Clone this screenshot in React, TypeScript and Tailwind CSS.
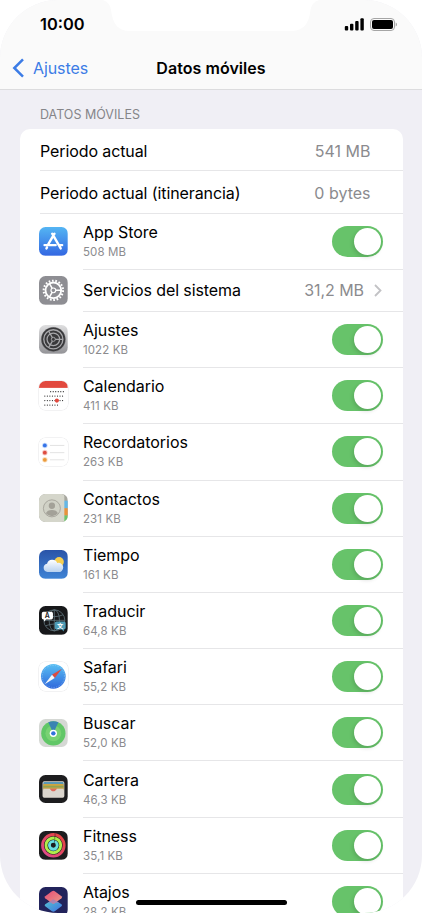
import React from "react";

const AppStoreIcon: React.FC = () => (
  <svg viewBox="0 0 30 30" className="w-full h-full">
    <defs>
      <linearGradient id="store" x1="0" y1="0" x2="0" y2="1">
        <stop offset="0" stopColor="#54b5f3" />
        <stop offset="1" stopColor="#3367e2" />
      </linearGradient>
    </defs>
    <rect width="30" height="30" fill="url(#store)" />
    <g stroke="#fff" strokeWidth="2.5" strokeLinecap="round" fill="none">
      <path d="M16.2 7 9.6 18.2M13.8 7l8.9 15.4M5.8 18.9h11.6M21.2 18.9h3M8.4 21.4l-.6 1" />
    </g>
  </svg>
);

const GearIcon: React.FC = () => (
  <svg viewBox="0 0 30 30" className="w-full h-full">
    <rect width="30" height="30" fill="#8e8e93" />
    <g fill="none" stroke="#fff">
      <circle cx="15" cy="15" r="10.1" strokeWidth="2.2" strokeDasharray="1.75 1.776" />
      <circle cx="15" cy="15" r="8.2" strokeWidth="1.9" />
      <circle cx="15" cy="15" r="2.5" strokeWidth="1.2" />
      <path d="M17.6 15h5.6M13.7 12.8l-2.8-4.9M13.7 17.2l-2.8 4.9" strokeWidth="1.6" />
    </g>
  </svg>
);

const SettingsIcon: React.FC = () => (
  <svg viewBox="0 0 30 30" className="w-full h-full">
    <defs>
      <linearGradient id="settings" x1="0" y1="0" x2="0" y2="1">
        <stop offset="0" stopColor="#dededf" />
        <stop offset="1" stopColor="#949498" />
      </linearGradient>
    </defs>
    <rect width="30" height="30" fill="url(#settings)" />
    <circle cx="15" cy="15" r="12.6" fill="#39393b" />
    <g fill="none" stroke="#a7a7aa">
      <circle cx="15" cy="15" r="10" strokeWidth="1.4" />
      <circle cx="15" cy="15" r="12.5" strokeWidth=".7" stroke="#707073" strokeDasharray=".8 .8" />
      <circle cx="15" cy="15" r="6.6" strokeWidth="1.3" />
      <circle cx="15" cy="15" r="2.1" strokeWidth="1" />
      <path d="M17 15h8M14 13.2 10 6.3M14 16.8l-4 6.9" strokeWidth="1.3" />
    </g>
  </svg>
);

const CalendarIcon: React.FC = () => (
  <svg viewBox="0 0 30 30" className="w-full h-full">
    <rect width="30" height="30" fill="#fff" />
    <rect width="30" height="7.2" fill="#e2493e" />
    <g stroke="#222" strokeWidth="1.25" strokeLinecap="round" strokeDasharray="0 2.65">
      <path d="M12.2 11.2h13.4M6.1 15.8h19.5M6.1 20.5h19.5M6.1 25.2h13.4" />
    </g>
    <circle cx="18.7" cy="20.5" r="2.2" fill="#e2493e" />
  </svg>
);

const RemindersIcon: React.FC = () => (
  <svg viewBox="0 0 30 30" className="w-full h-full">
    <rect width="30" height="30" fill="#fff" />
    <path d="M11.5 7.8h15M11.5 15.3h15M11.5 22.8h15" stroke="#dedede" strokeWidth=".9" />
    <circle cx="6.1" cy="7.8" r="2.9" fill="#c9dcfa" />
    <circle cx="6.1" cy="15.3" r="2.9" fill="#f8cdca" />
    <circle cx="6.1" cy="22.8" r="2.9" fill="#fae0bf" />
    <circle cx="6.1" cy="7.8" r="2" fill="#3674e8" />
    <circle cx="6.1" cy="15.3" r="2" fill="#dd4c40" />
    <circle cx="6.1" cy="22.8" r="2" fill="#eb9a3b" />
  </svg>
);

const ContactsIcon: React.FC = () => (
  <svg viewBox="0 0 30 30" className="w-full h-full">
    <rect width="30" height="30" fill="#a7a79f" />
    <path d="M26 7h4v8h-4z" fill="#63b7e6" />
    <path d="M26 15h4v7.5h-4z" fill="#e8923a" />
    <path d="M26 22.5h4V30h-4z" fill="#6cc56a" />
    <path d="M0 0h24.2q2.3 0 2.3 2.5v25q0 2.5-2.3 2.5H0z" fill="#d5d6cb" />
    <circle cx="13.5" cy="15" r="8.9" fill="#d0d1c6" stroke="#a3a198" strokeWidth=".9" />
    <circle cx="13.5" cy="12.3" r="3.3" fill="#a3a198" />
    <path d="M7.2 20.2q1.3-3.5 6.3-3.5t6.3 3.5a8.2 8.2 0 0 1-12.6 0z" fill="#a3a198" />
  </svg>
);

const WeatherIcon: React.FC = () => (
  <svg viewBox="0 0 30 30" className="w-full h-full">
    <defs>
      <linearGradient id="sky" x1="0" y1="0" x2="0" y2="1">
        <stop offset="0" stopColor="#2a54a8" />
        <stop offset="1" stopColor="#3e83d5" />
      </linearGradient>
      <linearGradient id="cloud" x1="0" y1="0" x2="0" y2="1">
        <stop offset="0" stopColor="#fff" />
        <stop offset="1" stopColor="#b7d1ef" />
      </linearGradient>
    </defs>
    <rect width="30" height="30" fill="url(#sky)" />
    <circle cx="21" cy="12.3" r="5" fill="#f5cf52" />
    <path d="M8.9 23a4.4 4.4 0 0 1-.5-8.7 5.7 5.7 0 0 1 10.7-.6 4.8 4.8 0 1 1 .6 9.3z" fill="url(#cloud)" />
  </svg>
);

const TranslateIcon: React.FC = () => (
  <svg viewBox="0 0 30 30" className="w-full h-full">
    <rect width="30" height="30" fill="#17181a" />
    <g fill="none" stroke="#63777f" strokeWidth=".8">
      <circle cx="16" cy="15" r="11" />
      <ellipse cx="16" cy="15" rx="5.4" ry="11" />
      <path d="M16 4v22M5 15h22M7 9.3q9 3.7 18 0M7 20.7q9-3.7 18 0" />
    </g>
    <path d="M4.7 6h8.1q1.8 0 1.8 1.8v4.6q0 1.8-1.8 1.8H7.4l-2.2 2.3v-2.3h-.5q-1.8 0-1.8-1.8V7.8Q2.9 6 4.7 6z" fill="#fff" />
    <text x="8.7" y="12.8" textAnchor="middle" fontSize="7.2" fontWeight="600" fontFamily="Inter, sans-serif" fill="#222">
      A
    </text>
    <path d="M18.3 16.2h7.8q1.8 0 1.8 1.8v4.8q0 1.8-1.8 1.8H26v2l-2.2-2h-5.5q-1.8 0-1.8-1.8V18q0-1.8 1.8-1.8z" fill="#4d9bb5" />
    <text x="22.2" y="22.9" textAnchor="middle" fontSize="6.5" fontWeight="700" fontFamily="'Noto Sans CJK SC', sans-serif" fill="#fff">
      文
    </text>
  </svg>
);

const SafariIcon: React.FC = () => (
  <svg viewBox="0 0 30 30" className="w-full h-full">
    <defs>
      <linearGradient id="safari" x1="0" y1="0" x2="0" y2="1">
        <stop offset="0" stopColor="#59bff3" />
        <stop offset="1" stopColor="#2f68dc" />
      </linearGradient>
    </defs>
    <rect width="30" height="30" fill="#fff" />
    <circle cx="15" cy="15" r="12.9" fill="url(#safari)" />
    <circle cx="15" cy="15" r="11.6" fill="none" stroke="#b9dcf8" strokeWidth="1" strokeDasharray=".4 1.42" />
    <path d="m24 7-10.4 6.4 2.8 3.3z" fill="#dc4a40" />
    <path d="m6 23.2 7.6-9.8 2.8 3.3z" fill="#f6f7f9" />
  </svg>
);

const FindMyIcon: React.FC = () => (
  <svg viewBox="0 0 30 30" className="w-full h-full">
    <rect width="30" height="30" fill="#d5d8d4" />
    <circle cx="15" cy="15" r="12.7" fill="#61c767" />
    <circle cx="15" cy="15" r="8.3" fill="#78d273" />
    <path d="M15 15 9.7 3.5a12.7 12.7 0 0 1 10.6 0z" fill="#3a84b2" />
    <circle cx="15" cy="15" r="3.8" fill="#fff" />
    <circle cx="15" cy="15" r="2.3" fill="#3272dc" />
  </svg>
);

const WalletIcon: React.FC = () => (
  <svg viewBox="0 0 30 30" className="w-full h-full">
    <rect width="30" height="30" fill="#1d1d1f" />
    <rect x="3.7" y="6.5" width="22.8" height="17.2" rx="1.8" fill="#ddd8cf" />
    <rect x="4.5" y="7.3" width="21.2" height="6" rx="1" fill="#5a98b5" />
    <path d="M4.5 9.3h21.2v5H4.5z" fill="#cfa53f" />
    <path d="M4.5 11.3h21.2v4H4.5z" fill="#8ea451" />
    <path d="M4.5 13h21.2v3H4.5z" fill="#c9a04a" />
    <path d="M4.5 14.3h6.7q1 0 1.5.8 2.3 3 4.8 0 .5-.8 1.5-.8h6.7v7.3q0 1.3-1.3 1.3H5.8q-1.3 0-1.3-1.3z" fill="#dbd6ce" />
    <path d="M10.8 14.3h8.4c-1.2 0-1.5 2.8-4.2 2.8s-3-2.8-4.2-2.8z" fill="#df6c5c" />
  </svg>
);

const FitnessIcon: React.FC = () => (
  <svg viewBox="0 0 30 30" className="w-full h-full">
    <defs>
      <linearGradient id="move" x1="1" y1="0" x2="0" y2="1">
        <stop offset="0" stopColor="#e64439" />
        <stop offset="1" stopColor="#df4c91" />
      </linearGradient>
    </defs>
    <rect width="30" height="30" fill="#1d1d1f" />
    <g fill="none" strokeWidth="3">
      <circle cx="15" cy="15" r="11.3" stroke="url(#move)" />
      <circle cx="15" cy="15" r="7.7" stroke="#aeee4b" />
      <circle cx="15" cy="15" r="4.1" stroke="#68dfe1" />
    </g>
    <path d="M16.8 2.3v3.3M16.5 5.7v3.2M16.2 9.2v3.2" stroke="#1d1d1f" strokeWidth=".9" opacity=".55" />
  </svg>
);

const ShortcutsIcon: React.FC = () => (
  <svg viewBox="0 0 30 30" className="w-full h-full">
    <defs>
      <linearGradient id="short1" x1="0" y1="0" x2="1" y2="1">
        <stop offset="0" stopColor="#e64c77" />
        <stop offset="1" stopColor="#e89b87" />
      </linearGradient>
      <linearGradient id="short2" x1="0" y1="0" x2="1" y2="1">
        <stop offset="0" stopColor="#55c6cf" />
        <stop offset="1" stopColor="#3f72e4" />
      </linearGradient>
    </defs>
    <rect width="30" height="30" fill="#22235b" />
    <path d="M13.5 13.5q1.5-1 3 0l7 4.6q1.3 1 0 2l-7 5.2q-1.5 1-3 0l-7-5.2q-1.3-1 0-2z" fill="url(#short2)" />
    <path d="M13.5 4.5q1.5-1 3 0l7 5.2q1.3 1 0 2l-7 5.2q-1.5 1-3 0l-7-5.2q-1.3-1 0-2z" fill="url(#short1)" />
    <path d="m15 12.8 6.3 4h-4.8q-1.5 1.3-3 0l-4.6-.2z" fill="#9c82bd" opacity=".75" />
  </svg>
);

type App = {
  name: string;
  usage: string;
  icon: React.FC;
  outlined?: boolean;
  link?: boolean;
};

const apps: App[] = [
  { name: "App Store", usage: "508 MB", icon: AppStoreIcon },
  { name: "Servicios del sistema", usage: "31,2 MB", icon: GearIcon, link: true },
  { name: "Ajustes", usage: "1022 KB", icon: SettingsIcon },
  { name: "Calendario", usage: "411 KB", icon: CalendarIcon, outlined: true },
  { name: "Recordatorios", usage: "263 KB", icon: RemindersIcon, outlined: true },
  { name: "Contactos", usage: "231 KB", icon: ContactsIcon },
  { name: "Tiempo", usage: "161 KB", icon: WeatherIcon },
  { name: "Traducir", usage: "64,8 KB", icon: TranslateIcon },
  { name: "Safari", usage: "55,2 KB", icon: SafariIcon, outlined: true },
  { name: "Buscar", usage: "52,0 KB", icon: FindMyIcon },
  { name: "Cartera", usage: "46,3 KB", icon: WalletIcon },
  { name: "Fitness", usage: "35,1 KB", icon: FitnessIcon },
  { name: "Atajos", usage: "28,2 KB", icon: ShortcutsIcon },
];

const Toggle: React.FC = () => (
  <button
    type="button"
    role="switch"
    aria-checked="true"
    className="w-[51px] h-[31px] p-[2px] flex justify-end rounded-full bg-[#67c36a]"
  >
    <span className="w-[27px] h-[27px] rounded-full bg-white shadow-[-1px_2px_4px_rgba(0,0,0,0.15)]" />
  </button>
);

const TotalRow: React.FC<{ label: string; value: string }> = ({ label, value }) => (
  <div className="ml-5 h-[42.2px] pt-[1.5px] pr-8 flex items-center justify-between border-b border-[#e6e6e8]">
    <span className="text-[16px] tracking-[-0.1px] text-black">{label}</span>
    <span className="text-[16px] text-[#8b8b8e]">{value}</span>
  </div>
);

const AppRow: React.FC<{ app: App }> = ({ app }) => {
  const Icon = app.icon;
  return (
    <div className={app.link ? "flex items-center h-[42.1px] pl-[19.3px]" : "flex items-center h-[56.2px] pl-[19.3px]"}>
      <div
        className={
          app.outlined
            ? "w-[28.7px] h-[28.7px] mb-px rounded-[6.5px] overflow-hidden ring-[0.5px] ring-[#e6e6e8]"
            : "w-[28.7px] h-[28.7px] mb-px rounded-[6.5px] overflow-hidden"
        }
      >
        <Icon />
      </div>
      <div className="ml-[15px] h-full flex-1 pr-5 flex items-center justify-between border-b border-[#e6e6e8]">
        {app.link ? (
          <>
            <span className="text-[16px] tracking-[-0.1px] text-black">{app.name}</span>
            <span className="flex items-center text-[16px] tracking-[-0.05px] text-[#8b8b8e]">
              {app.usage}
              <svg viewBox="0 0 8 13" className="w-2 h-[13px] ml-[10px] mr-[0.5px]" fill="none" stroke="#c2c2c5" strokeWidth="1.8">
                <path d="m1 1 5.5 5.5L1 12" />
              </svg>
            </span>
          </>
        ) : (
          <>
            <div className="pt-px flex flex-col">
              <span className="text-[16px] leading-[20px] tracking-[-0.05px] text-black">{app.name}</span>
              <span className="mt-px text-[11.5px] leading-[19px] tracking-[0.1px] text-[#8b8b8e]">{app.usage}</span>
            </div>
            <Toggle />
          </>
        )}
      </div>
    </div>
  );
};

const App: React.FC = () => {
  return (
    <div className="relative w-[422px] h-[913px] overflow-hidden rounded-[58px] bg-[#f0eff5] font-['Inter',sans-serif]">
      <header className="h-[90px] flex flex-col bg-[#fafafa] border-b border-[#dcdcde]">
        <div className="h-12 pl-10 pr-[25px] flex items-center justify-between">
          <span className="text-[16.4px] font-semibold text-black">10:00</span>
          <div className="flex items-center gap-[6px]">
            <svg viewBox="0 0 20 13" className="w-5 h-[13px]">
              <rect x=".8" y="8" width="3.4" height="4.4" rx="1" />
              <rect x="6" y="5.8" width="3.4" height="6.6" rx="1" />
              <rect x="11.2" y="3" width="3.4" height="9.4" rx="1" />
              <rect x="16.4" y=".3" width="3.4" height="12.1" rx="1" />
            </svg>
            <svg viewBox="0 0 27 13" className="w-[27px] h-[13px]">
              <rect x=".5" y=".5" width="24" height="12" rx="3.5" fill="none" stroke="#a5a5a5" />
              <rect x="2" y="2" width="21" height="9" rx="2" />
              <path d="M25.7 4.5q1.3.6 1.3 2t-1.3 2z" fill="#a5a5a5" />
            </svg>
          </div>
        </div>
        <nav className="h-10 px-3 grid grid-cols-[1fr_auto_1fr] items-center">
          <a className="flex items-center gap-[9px] text-[16px] tracking-[-0.1px] text-[#3c7ce6]">
            <svg viewBox="0 0 12 20" className="w-3 h-5" fill="none" stroke="#3c7ce6" strokeWidth="2.5">
              <path d="M11 1.3 2.3 10l8.7 8.7" />
            </svg>
            Ajustes
          </a>
          <h1 className="text-[16px] tracking-[0.05px] font-semibold text-black">Datos móviles</h1>
        </nav>
      </header>

      <main className="px-5 pt-[14px]">
        <h2 className="pl-5 h-[25px] pt-[2px] text-[12.5px] leading-[18px] text-[#858589]">DATOS MÓVILES</h2>
        <section className="w-[382.5px] pt-[0.3px] rounded-t-[10px] bg-white">
          <TotalRow label="Periodo actual" value="541 MB" />
          <TotalRow label="Periodo actual (itinerancia)" value="0 bytes" />
          {apps.map((app) => (
            <AppRow key={app.name} app={app} />
          ))}
        </section>
      </main>

      {/* notch */}
      <svg viewBox="0 0 216 32" className="absolute top-0 left-[103px] w-[216px] h-8" fill="#fff">
        <path d="M0 0q7 2 8.2 11C9.8 24 15 31 27 31h161c12 0 18-7 19.3-20Q208.5 2 216 0z" />
      </svg>
      {/* home indicator */}
      <div className="absolute left-[136px] top-[900px] w-[151px] h-[5px] rounded-full bg-black" />
    </div>
  );
};

export default App;
